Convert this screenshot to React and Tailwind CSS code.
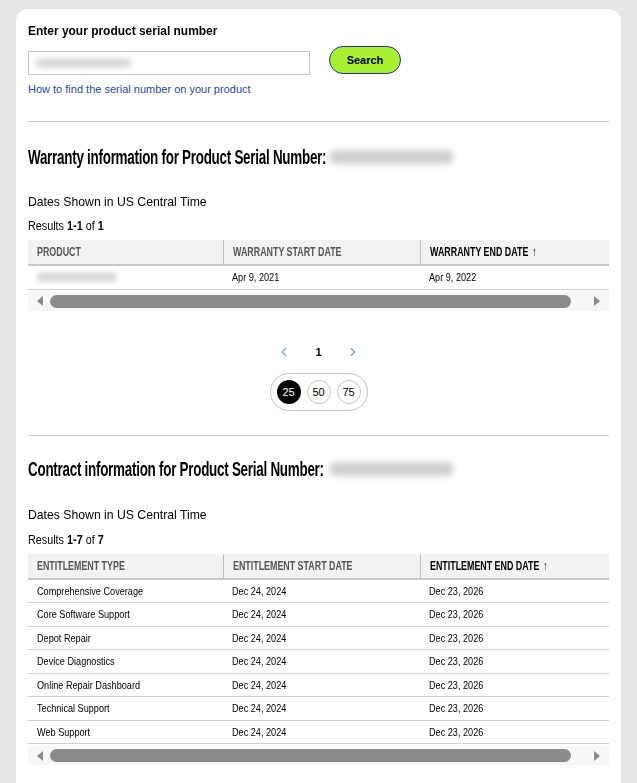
import { ChevronLeft, ChevronRight } from 'lucide-react'

const contracts = [
  'Comprehensive Coverage',
  'Core Software Support',
  'Depot Repair',
  'Device Diagnostics',
  'Online Repair Dashboard',
  'Technical Support',
  'Web Support',
]

// condensed look: no narrow font installed, so squeeze Liberation Sans
function Cond({ children, className = '' }) {
  return <span className={`inline-block origin-left whitespace-nowrap ${className}`}>{children}</span>
}

function Blur({ className }) {
  return <span className={`inline-block rounded-full bg-[#cfcfcf] blur-[3px] ${className}`} />
}

function ScrollBar() {
  return (
    <div className="flex items-center h-[19px] bg-[#f7f7f7] px-[8px] gap-[6px]">
      <svg width="8" height="10" viewBox="0 0 8 10"><path d="M7 0 L1 5 L7 10 Z" fill="#8a8a8a" /></svg>
      <div className="flex-1 h-[13px] rounded-full bg-[#8a8a8a]" />
      <div className="w-[10px]" />
      <svg width="8" height="10" viewBox="0 0 8 10"><path d="M1 0 L7 5 L1 10 Z" fill="#8a8a8a" /></svg>
    </div>
  )
}

function Table({ headers, rows }) {
  return (
    <div>
      <div className="grid grid-cols-[195px_197px_1fr] bg-[#f2f2f2] h-[26px] border-b-2 border-[#c8c8c8]">
        {headers.map((h, i) => (
          <div key={h} className={`flex items-center pl-[9px] text-[12px] font-bold uppercase ${i > 0 ? 'border-l border-[#bdbdbd]' : ''} ${i === 2 ? 'text-black' : 'text-[#555]'}`}>
            <Cond className="scale-x-[0.74]">{h}{i === 2 && <span className="ml-[5px]">↑</span>}</Cond>
          </div>
        ))}
      </div>
      {rows.map((r, i) => (
        <div key={i} className="grid grid-cols-[195px_197px_1fr] h-[23.5px] border-b border-[#cfcfcf] text-[11px] text-black">
          {r.map((c, j) => (
            <div key={j} className="flex items-center pl-[9px]">
              <Cond className="scale-x-[0.83]">{c}</Cond>
            </div>
          ))}
        </div>
      ))}
      <div className="mt-[2px]">
        <ScrollBar />
      </div>
    </div>
  )
}

function SectionHead({ title }) {
  return (
    <div className="flex items-center h-[22px]">
      <h2 className="w-[301px] text-[21px] font-bold text-black leading-[22px]">
        <Cond className="scale-x-[0.64] tracking-[-0.02em]">{title}</Cond>
      </h2>
      <Blur className="w-[125px] h-[14px]" />
    </div>
  )
}

export default function App() {
  return (
    <div className="min-h-screen bg-[#e6e6e6] pt-[9px] px-[16px]" style={{ fontFamily: '"Liberation Sans", Arial, sans-serif' }}>
      <div className="bg-white rounded-t-[12px] px-[12px] pt-[14px] pb-[40px]">
        <h2 className="text-[13px] font-bold text-black leading-[16px]">
          <Cond className="scale-x-[0.92]">Enter your product serial number</Cond>
        </h2>
        <div className="flex items-start mt-[7px]">
          <div className="w-[282px] h-[24px] border border-[#c4c4c4] flex items-center px-[7px] mt-[5px]">
            <Blur className="w-[95px] h-[8px]" />
          </div>
          <button className="ml-[19px] w-[72px] h-[28px] rounded-full bg-[#a6f030] border border-[#1c3a8a] text-[11px] font-bold text-black">Search</button>
        </div>
        <a className="block mt-[6px] text-[11px] text-[#1a46b8]">How to find the serial number on your product</a>

        <div className="border-t border-[#c8c8c8] mt-[23px]" />

        <div className="mt-[24px]">
          <SectionHead title="Warranty information for Product Serial Number:" />
        </div>
        <p className="text-[13px] text-black mt-[24px]"><Cond className="scale-x-[0.94]">Dates Shown in US Central Time</Cond></p>
        <p className="text-[12px] text-black mt-[6px] mb-[5px]"><Cond className="scale-x-[0.9]">Results <b>1-1</b> of <b>1</b></Cond></p>
        <Table
          headers={['Product', 'Warranty Start Date', 'Warranty End Date']}
          rows={[[<Blur key="b" className="w-[96px] h-[8px]" />, 'Apr 9, 2021', 'Apr 9, 2022']]}
        />

        <div className="flex justify-center items-center gap-[24px] mt-[33px] text-[11px]">
          <ChevronLeft size={14} className="text-[#7b9be0]" />
          <span className="font-bold text-black">1</span>
          <ChevronRight size={14} className="text-[#7b9be0]" />
        </div>
        <div className="flex justify-center mt-[13px]">
          <div className="flex gap-[6px] border border-[#c4c4c4] rounded-full px-[6px] py-[6px]">
            <span className="w-[24px] h-[24px] rounded-full bg-black text-white text-[11px] flex items-center justify-center">25</span>
            <span className="w-[24px] h-[24px] rounded-full border border-[#c4c4c4] text-black text-[11px] flex items-center justify-center">50</span>
            <span className="w-[24px] h-[24px] rounded-full border border-[#c4c4c4] text-black text-[11px] flex items-center justify-center">75</span>
          </div>
        </div>

        <div className="border-t border-[#c8c8c8] mt-[24px]" />

        <div className="mt-[22px]">
          <SectionHead title="Contract information for Product Serial Number:" />
        </div>
        <p className="text-[13px] text-black mt-[25px]"><Cond className="scale-x-[0.94]">Dates Shown in US Central Time</Cond></p>
        <p className="text-[12px] text-black mt-[6px] mb-[5px]"><Cond className="scale-x-[0.9]">Results <b>1-7</b> of <b>7</b></Cond></p>
        <Table
          headers={['Entitlement Type', 'Entitlement Start Date', 'Entitlement End Date']}
          rows={contracts.map(c => [c, 'Dec 24, 2024', 'Dec 23, 2026'])}
        />
      </div>
    </div>
  )
}
